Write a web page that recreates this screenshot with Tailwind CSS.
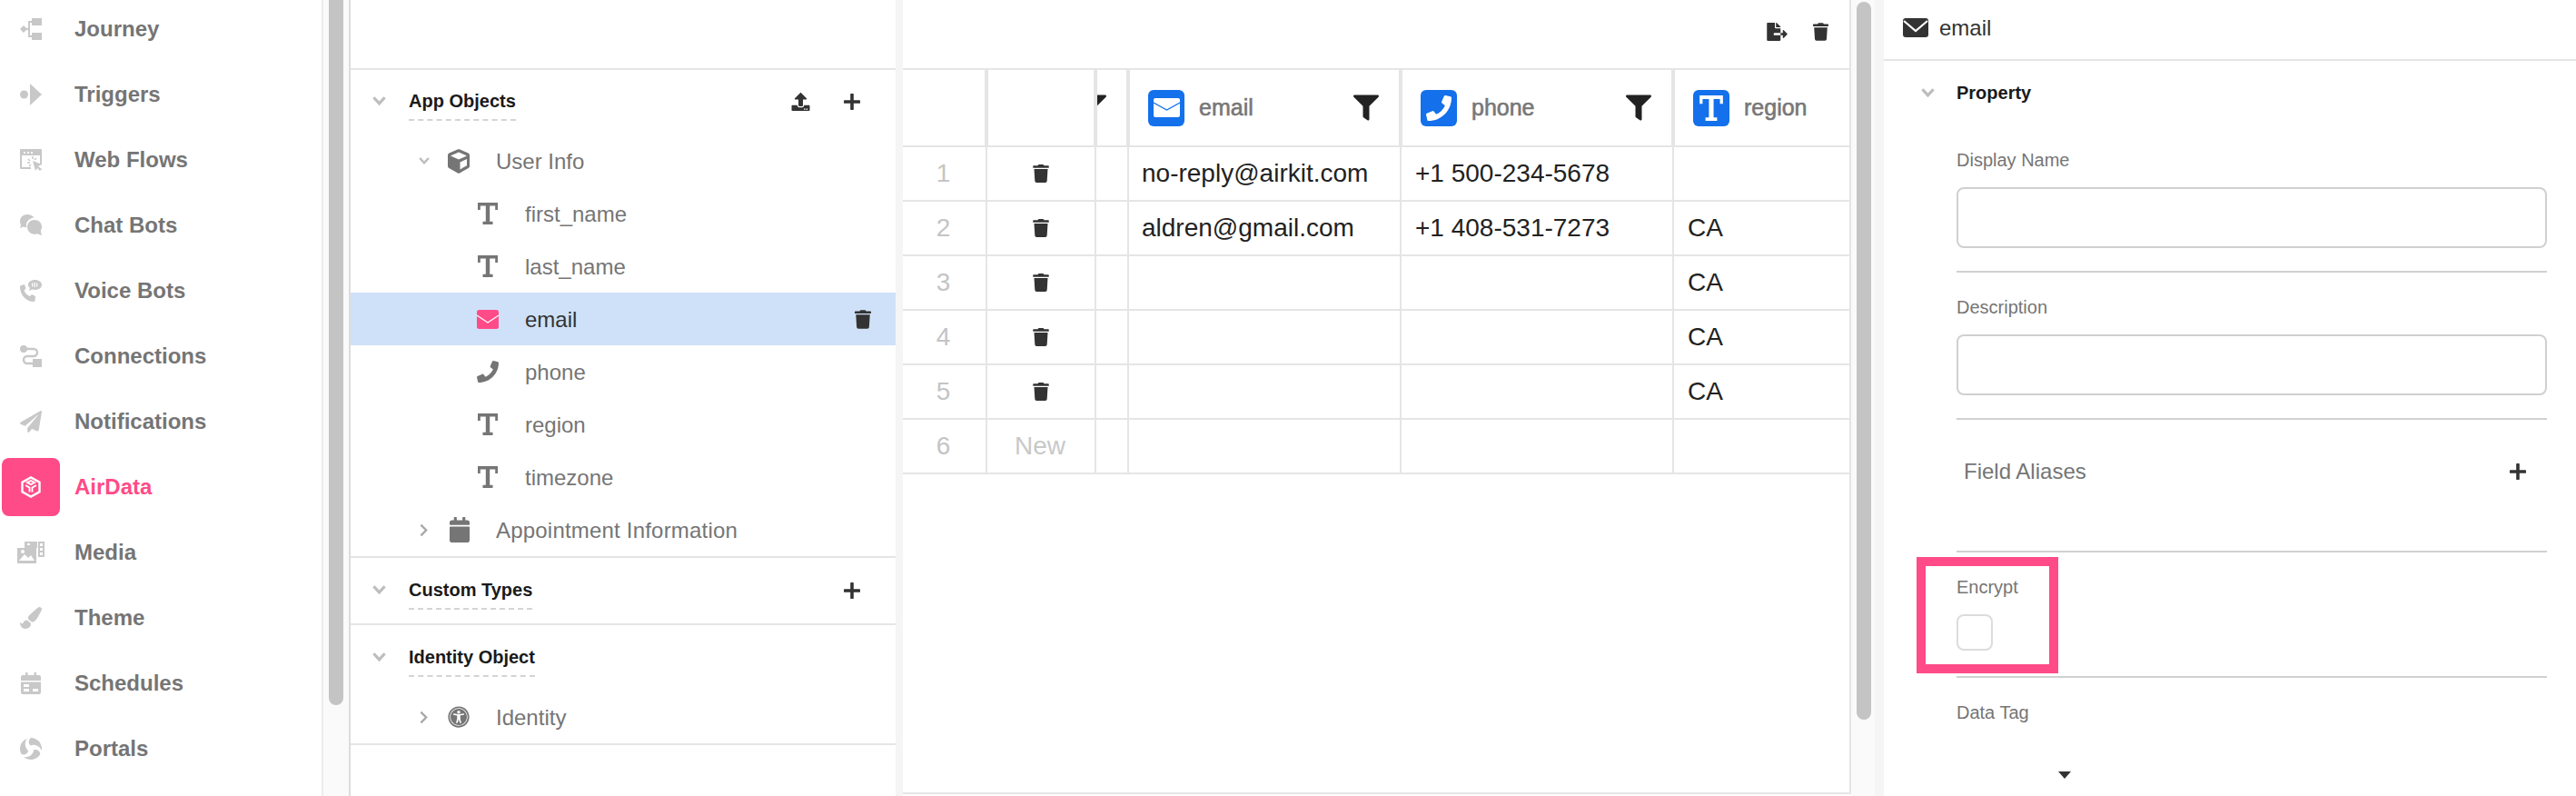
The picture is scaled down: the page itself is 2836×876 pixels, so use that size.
<!DOCTYPE html>
<html>
<head>
<meta charset="utf-8">
<script src="https://cdn.jsdelivr.net/npm/@tailwindcss/browser@4"></script>
</head>
<body class="w-[2836px] h-[876px] overflow-hidden flex bg-white text-[#222] font-['Liberation_Sans',Arial,sans-serif]">
<svg class="hidden">
  <symbol id="trash" viewBox="0 0 448 512"><path fill="currentColor" d="M432 32H312l-9.4-18.7A24 24 0 0 0 281.1 0H166.8a23.72 23.72 0 0 0-21.4 13.3L136 32H16A16 16 0 0 0 0 48v32a16 16 0 0 0 16 16h416a16 16 0 0 0 16-16V48a16 16 0 0 0-16-16zM53.2 467a48 48 0 0 0 47.9 45h245.8a48 48 0 0 0 47.9-45L416 128H32z"/></symbol>
  <symbol id="phone" viewBox="0 0 512 512"><path fill="currentColor" d="M493.4 24.6l-104-24c-11.3-2.6-22.9 3.3-27.5 13.9l-48 112c-4.2 9.8-1.4 21.3 6.9 28l60.6 49.6c-36 76.7-98.9 140.5-177.2 177.2l-49.6-60.6c-6.8-8.3-18.2-11.1-28-6.9l-112 48C3.9 366.5-2 378.1.6 389.4l24 104C27.1 504.2 36.7 512 48 512c256.1 0 464-207.5 464-464 0-11.2-7.7-20.9-18.6-23.4z"/></symbol>
  <symbol id="filter" viewBox="0 0 512 512"><path fill="currentColor" d="M487.976 0H24.028C2.71 0-8.047 25.866 7.058 40.971L192 225.941V432c0 7.831 3.821 15.17 10.237 19.662l80 55.98C298.02 518.69 320 507.493 320 487.98V225.941l184.947-184.97C520.021 25.896 509.338 0 487.976 0z"/></symbol>
  <symbol id="tee" viewBox="0 0 22 24"><path fill="currentColor" d="M0 0h22v8h-2.800V3.500H13.200v17.200H16.500V24h-11v-3.300h3.300V3.500H2.800V8H0z"/></symbol>
  <symbol id="plus" viewBox="0 0 18 18"><path fill="currentColor" d="M7.2 1.2a1.2 1.2 0 0 1 3.6 0v6h6a1.8 1.8 0 0 1 0 3.6h-6v6a1.8 1.8 0 0 1-3.6 0v-6h-6a1.8 1.8 0 0 1 0-3.6h6z"/></symbol>
  <symbol id="down" viewBox="0 0 16 12"><path fill="none" stroke="currentColor" stroke-width="3.4" d="M1.5 2l6.5 7 6.5-7"/></symbol>
  <symbol id="right" viewBox="0 0 10 16"><path fill="none" stroke="currentColor" stroke-width="2.6" d="M1.5 1.5L8 8l-6.5 6.5"/></symbol>
</svg>

<!-- Left navigation -->
<nav class="w-[354px] shrink-0 -mt-1 text-[24px] font-bold text-[#757575]">
  <div class="h-[72px] flex items-center pl-[2px]"><span class="w-[64px] h-[64px] flex items-center justify-center"><svg class="w-[24px] h-[24px] text-[#c8c8c8]" viewBox="0 0 24 24"><path fill="currentColor" d="M0 12l4-4 4 4-4 4zM13 0h11v8H13zM13 16h11v8H13z"/><path fill="none" stroke="currentColor" stroke-width="2" d="M13 4h-3v16h3M6 12h4"/></svg></span><span class="ml-[16px]">Journey</span></div>
  <div class="h-[72px] flex items-center pl-[2px]"><span class="w-[64px] h-[64px] flex items-center justify-center"><svg class="w-[24px] h-[24px] text-[#c8c8c8]" viewBox="0 0 24 24"><circle cx="4.500" cy="12" r="4.500" fill="currentColor"/><path fill="currentColor" d="M11 0l13 12-13 12z"/></svg></span><span class="ml-[16px]">Triggers</span></div>
  <div class="h-[72px] flex items-center pl-[2px]"><span class="w-[64px] h-[64px] flex items-center justify-center"><svg class="w-[24px] h-[24px] text-[#c8c8c8]" viewBox="0 0 24 24"><path fill="currentColor" d="M1 0h22a1 1 0 0 1 1 1v16h-2V7H2v13h10v2H1a1 1 0 0 1-1-1V1a1 1 0 0 1 1-1z"/><path fill="#fff" d="M4 3h2v2H4zM8 3h2v2H8zM12 3h2v2h-2z"/><path fill="currentColor" d="M14 13l10 4-4 2 4 3-2 2-3-3-2 3z"/><path fill="none" stroke="currentColor" stroke-width="1.500" d="M14 8v3M9 11l2 2M8 15h3M10 19l2-2M18 10l-2 2"/></svg></span><span class="ml-[16px]">Web Flows</span></div>
  <div class="h-[72px] flex items-center pl-[2px]"><span class="w-[64px] h-[64px] flex items-center justify-center"><svg class="w-[24px] h-[24px] text-[#c8c8c8]" viewBox="0 0 24 24"><path fill="currentColor" d="M8 0c3 0 6 1.500 7.500 3.500C10.500 4 7 7.500 7 12l.2 2c-1.200.2-2.500 0-3.700-.5L0 15l1-3.500C.3 10.300 0 9 0 7.500 0 3 3.500 0 8 0z"/><path fill="currentColor" d="M16 6c4.500 0 8 3 8 7.500 0 1.800-.5 3.300-1.300 4.500l1.300 5-5-1.800c-1 .4-2 .6-3 .6-4.500 0-8-3.500-8-8S11.500 6 16 6z"/></svg></span><span class="ml-[16px]">Chat Bots</span></div>
  <div class="h-[72px] flex items-center pl-[2px]"><span class="w-[64px] h-[64px] flex items-center justify-center"><svg class="w-[24px] h-[24px] text-[#c8c8c8]" viewBox="0 0 24 24"><path fill="currentColor" d="M5 5l1.500 4.500-2 2c1 3 3.500 5.500 6.500 6.500l2-2L17 18l-.5 5c-.1.6-.5 1-1.200 1C7 24 0 17 0 7.500c0-.7.400-1.200 1-1.300z"/><path fill="currentColor" d="M16.500 0C20.600 0 24 2.300 24 5.500S20.600 11 16.500 11c-1 0-2-.1-2.800-.4L10 12l1-3.200C9.700 7.800 9 6.700 9 5.500 9 2.300 12.400 0 16.500 0z"/><path fill="#fff" d="M13 3.500h1.200v4H13zM15.500 3h1.200v5h-1.200zM18 3.500h1.200v4H18z"/></svg></span><span class="ml-[16px]">Voice Bots</span></div>
  <div class="h-[72px] flex items-center pl-[2px]"><span class="w-[64px] h-[64px] flex items-center justify-center"><svg class="w-[24px] h-[24px] text-[#c8c8c8]" viewBox="0 0 24 24"><circle cx="4" cy="4" r="4" fill="currentColor"/><path fill="currentColor" d="M14 15h10v9H14z"/><path fill="none" stroke="currentColor" stroke-width="2.400" d="M6 4h9a4 4 0 0 1 0 8H8a4 4 0 0 0 0 8h7"/></svg></span><span class="ml-[16px]">Connections</span></div>
  <div class="h-[72px] flex items-center pl-[2px]"><span class="w-[64px] h-[64px] flex items-center justify-center"><svg class="w-[24px] h-[24px] text-[#c8c8c8]" viewBox="0 0 512 512"><path fill="currentColor" d="M476 3.2L12.5 270.6c-18.1 10.4-15.8 35.6 2.2 43.2L121 358.4l287.3-253.2c5.5-4.9 13.3 2.6 8.6 8.3L176 407v80.5c0 23.6 28.5 32.9 42.5 15.8L282 426l124.6 52.2c14.2 6 30.4-2.9 33-18.2l72-432C515 7.8 493.3-6.8 476 3.2z"/></svg></span><span class="ml-[16px]">Notifications</span></div>
  <div class="h-[72px] flex items-center pl-[2px] text-[#ff4b87]"><span class="w-[64px] h-[64px] flex items-center justify-center rounded-lg bg-[#ff4b87]"><svg class="w-[24px] h-[24px] text-white" viewBox="0 0 24 24" fill="none" stroke="currentColor" stroke-width="2.400"><path d="M12 1.400l9.500 5.300v10.600L12 22.600l-9.500-5.300V6.700z"/><path d="M8 7l4-2 4 2-4 2.200zM6 10l4.500 2.600v5M18 10l-4.500 2.600v5" stroke-width="1.900"/></svg></span><span class="ml-[16px]">AirData</span></div>
  <div class="h-[72px] flex items-center pl-[2px]"><span class="w-[64px] h-[64px] flex items-center justify-center"><svg class="w-[30px] h-[24px] text-[#c8c8c8]" viewBox="0 0 30 24"><path fill="currentColor" d="M8 0h14v7H8zM23 0h7v17h-7zM0 7h21v17H0z"/><path fill="#fff" d="M25 2h3v3h-3zM25 7h3v3h-3zM25 12h3v3h-3zM11 2h3v2h-3zM2 21l6-7 4 4 3-3 4 6z"/><circle cx="6" cy="11" r="2" fill="#fff"/></svg></span><span class="ml-[16px]">Media</span></div>
  <div class="h-[72px] flex items-center pl-[2px]"><span class="w-[64px] h-[64px] flex items-center justify-center"><svg class="w-[24px] h-[24px] text-[#c8c8c8]" viewBox="0 0 512 512"><path fill="currentColor" d="M167.02 309.34c-40.12 2.58-76.53 17.86-97.19 72.3-2.35 6.21-8 9.98-14.59 9.98-11.11 0-45.46-27.67-55.25-34.35C0 439.62 37.93 512 128 512c75.86 0 128-43.77 128-120.19 0-3.11-.65-6.08-.97-9.13l-88.01-73.34zM457.89 0c-15.16 0-29.37 6.71-40.21 16.45C213.27 199.05 192 203.34 192 257.09c0 13.7 3.25 26.76 8.73 38.7l63.82 53.18c7.21 1.8 14.64 3.03 22.39 3.03 62.11 0 98.11-45.47 211.16-256.46 7.38-14.35 13.9-29.85 13.9-45.99C512 20.64 486 0 457.89 0z"/></svg></span><span class="ml-[16px]">Theme</span></div>
  <div class="h-[72px] flex items-center pl-[2px]"><span class="w-[64px] h-[64px] flex items-center justify-center"><svg class="w-[22px] h-[24px] text-[#c8c8c8]" viewBox="0 0 22 24"><path fill="currentColor" d="M5 0h2.500v3h7V0H17v3h3a2 2 0 0 1 2 2v4H0V5a2 2 0 0 1 2-2h3zM0 10.500h22V22a2 2 0 0 1-2 2H2a2 2 0 0 1-2-2z"/><path fill="#fff" d="M3 13h6v3H3zM3 18h6v3H3zM13 18h6v3h-6z"/></svg></span><span class="ml-[16px]">Schedules</span></div>
  <div class="h-[72px] flex items-center pl-[2px]"><span class="w-[64px] h-[64px] flex items-center justify-center"><svg class="w-[24px] h-[24px] text-[#c8c8c8]" viewBox="0 0 24 24"><g fill="currentColor"><path d="M12 0A12 12 0 0 1 23.800 14.100C22 9 16 6.500 11.500 8.500 9 6 9 2.500 12 0z"/><path transform="rotate(120 12 12)" d="M12 0A12 12 0 0 1 23.800 14.100C22 9 16 6.500 11.500 8.500 9 6 9 2.500 12 0z"/><path transform="rotate(240 12 12)" d="M12 0A12 12 0 0 1 23.800 14.100C22 9 16 6.500 11.500 8.500 9 6 9 2.500 12 0z"/></g></svg></span><span class="ml-[16px]">Portals</span></div>
</nav>

<!-- Scrollbar of the navigation -->
<div class="w-[32px] shrink-0 h-full border-x-2 border-l-[#ececec] border-r-[#dcdcdc] bg-[#fafafa]">
  <div class="ml-[6px] w-[16px] h-[776px] bg-[#c4c4c4] rounded-b-lg"></div>
</div>

<!-- Tree -->
<section class="w-[600px] shrink-0 h-full text-[24px] text-[#757575]">
  <div class="h-[77px] border-b-2 border-[#e5e5e5]"></div>

  <div class="border-b-2 border-[#e5e5e5]">
    <div class="h-[71px] flex items-start pt-[22px] pl-[24px] pr-[39px] text-[20px] font-bold text-[#1a1a1a]">
      <svg class="w-[15px] h-[12px] mt-[6px] mr-[25px] text-[#bdbdbd]"><use href="#down"/></svg>
      <span class="leading-[24px] pb-[8px] border-b-2 border-dashed border-[#d4d4d4]">App Objects</span>
      <svg class="w-[21px] h-[20px] ml-auto mt-[3px] text-[#333]" viewBox="0 0 512 512"><path fill="currentColor" d="M296 384h-80c-13.300 0-24-10.700-24-24V192h-87.700c-17.800 0-26.700-21.500-14.100-34.100L242.300 5.700c7.500-7.500 19.800-7.500 27.300 0l152.200 152.200c12.600 12.600 3.700 34.100-14.100 34.100H320v168c0 13.300-10.700 24-24 24zm216-8v112c0 13.300-10.700 24-24 24H24c-13.300 0-24-10.700-24-24V376c0-13.300 10.700-24 24-24h136v8c0 30.900 25.100 56 56 56h80c30.900 0 56-25.100 56-56v-8h136c13.300 0 24 10.700 24 24zm-124 88c0-11-9-20-20-20s-20 9-20 20 9 20 20 20 20-9 20-20zm64 0c0-11-9-20-20-20s-20 9-20 20 9 20 20 20 20-9 20-20z"/></svg>
      <svg class="w-[18px] h-[18px] ml-[37px] mt-[4px] text-[#333]"><use href="#plus"/></svg>
    </div>
    <div class="h-[58px] flex items-center pl-[75px]">
      <svg class="w-[12px] h-[10px] mr-[20px] text-[#bdbdbd]" viewBox="0 0 16 12"><use href="#down"/></svg>
      <svg class="w-[24px] h-[27px] mr-[29px] text-[#757575]" viewBox="0 0 512 512" preserveAspectRatio="none"><path fill="currentColor" d="M239.100 6.300l-208 78c-18.700 7-31.100 25-31.100 45v225.100c0 18.200 10.300 34.800 26.500 42.900l208 104c13.500 6.800 29.400 6.800 42.900 0l208-104c16.300-8.100 26.500-24.800 26.500-42.900V129.300c0-20-12.400-37.900-31.100-44.900l-208-78C262 2.200 250 2.200 239.100 6.300zM256 68.400l192 72v1.100l-192 78-192-78v-1.100l192-72zm32 356V275.500l160-65v133.900l-160 80z"/></svg>
      <span class="pt-[2px]">User Info</span>
    </div>
    <div class="h-[58px] flex items-center pl-[140px]"><svg class="w-[22px] h-[24px] mr-[30px]"><use href="#tee"/></svg><span class="pt-[2px]">first_name</span></div>
    <div class="h-[58px] flex items-center pl-[140px]"><svg class="w-[22px] h-[24px] mr-[30px]"><use href="#tee"/></svg><span class="pt-[2px]">last_name</span></div>
    <div class="h-[58px] flex items-center pl-[139px] pr-[27px] bg-[#cfe1f9] text-[#333]">
      <svg class="w-[24px] h-[21px] mr-[29px] text-[#ff4b87]" viewBox="0 0 24 21"><rect width="24" height="21" rx="2.500" fill="currentColor"/><path d="M0 6l12 8 12-8" fill="none" stroke="#fff" stroke-width="1.200"/></svg>
      <span class="pt-[2px]">email</span>
      <svg class="w-[18px] h-[21px] ml-auto text-[#333]"><use href="#trash"/></svg>
    </div>
    <div class="h-[58px] flex items-center pl-[139px]"><svg class="w-[24px] h-[24px] mr-[29px]"><use href="#phone"/></svg><span class="pt-[2px]">phone</span></div>
    <div class="h-[58px] flex items-center pl-[140px]"><svg class="w-[22px] h-[24px] mr-[30px]"><use href="#tee"/></svg><span class="pt-[2px]">region</span></div>
    <div class="h-[58px] flex items-center pl-[140px]"><svg class="w-[22px] h-[24px] mr-[30px]"><use href="#tee"/></svg><span class="pt-[2px]">timezone</span></div>
    <div class="h-[58px] flex items-center pl-[76px]">
      <svg class="w-[9px] h-[15px] mr-[24px] text-[#a8a8a8]"><use href="#right"/></svg>
      <svg class="w-[22px] h-[28px] mr-[30px] text-[#757575]" viewBox="0 0 448 512" preserveAspectRatio="none"><path fill="currentColor" d="M12 192h424c6.600 0 12 5.400 12 12v260c0 26.500-21.500 48-48 48H48c-26.500 0-48-21.500-48-48V204c0-6.600 5.400-12 12-12zm436-44v-36c0-26.500-21.500-48-48-48h-48V12c0-6.600-5.400-12-12-12h-40c-6.600 0-12 5.400-12 12v52H160V12c0-6.600-5.400-12-12-12h-40c-6.600 0-12 5.400-12 12v52H48C21.500 64 0 85.500 0 112v36c0 6.600 5.400 12 12 12h424c6.600 0 12-5.400 12-12z"/></svg>
      <span class="pt-[2px] tracking-[0.2px] -ml-[1px]">Appointment Information</span>
    </div>
  </div>

  <div class="h-[74px] border-b-2 border-[#e5e5e5] flex items-start pt-[23px] pl-[24px] pr-[39px] text-[20px] font-bold text-[#1a1a1a]">
    <svg class="w-[15px] h-[12px] mt-[6px] mr-[25px] text-[#bdbdbd]"><use href="#down"/></svg>
    <span class="leading-[24px] pb-[8px] border-b-2 border-dashed border-[#d4d4d4]">Custom Types</span>
    <svg class="w-[18px] h-[18px] ml-auto mt-[4px] text-[#333]"><use href="#plus"/></svg>
  </div>

  <div class="border-b-2 border-[#e5e5e5]">
    <div class="h-[72px] flex items-start pt-[23px] pl-[24px] text-[20px] font-bold text-[#1a1a1a]">
      <svg class="w-[15px] h-[12px] mt-[6px] mr-[25px] text-[#bdbdbd]"><use href="#down"/></svg>
      <span class="leading-[24px] pb-[8px] border-b-2 border-dashed border-[#d4d4d4]">Identity Object</span>
    </div>
    <div class="h-[58px] flex items-center pl-[76px]">
      <svg class="w-[9px] h-[15px] mr-[22px] text-[#a8a8a8]"><use href="#right"/></svg>
      <svg class="w-[24px] h-[24px] mr-[29px] text-[#757575]" viewBox="0 0 512 512"><path fill="currentColor" d="M256 48c114.953 0 208 93.029 208 208 0 114.953-93.029 208-208 208-114.953 0-208-93.029-208-208 0-114.953 93.029-208 208-208m0-40C119.033 8 8 119.033 8 256s111.033 248 248 248 248-111.033 248-248S392.967 8 256 8zm0 56C149.961 64 64 149.961 64 256s85.961 192 192 192 192-85.961 192-192S362.039 64 256 64zm0 44c19.882 0 36 16.118 36 36s-16.118 36-36 36-36-16.118-36-36 16.118-36 36-36zm117.741 98.023c-28.712 6.779-55.511 12.748-82.14 15.807.851 101.023 12.306 123.052 25.037 155.621 3.617 9.26-.957 19.698-10.217 23.315-9.261 3.617-19.699-.957-23.316-10.217-8.705-22.308-17.086-40.636-22.261-78.549h-9.686c-5.167 37.851-13.534 56.208-22.262 78.549-3.615 9.255-14.05 13.836-23.315 10.217-9.26-3.617-13.834-14.056-10.217-23.315 12.713-32.541 24.185-54.541 25.037-155.621-26.629-3.058-53.428-9.027-82.141-15.807-8.6-2.031-13.926-10.648-11.895-19.249s10.647-13.926 19.249-11.895c96.686 22.829 124.283 22.783 220.775 0 8.599-2.03 17.218 3.294 19.249 11.895 2.029 8.601-3.297 17.219-11.897 19.249z"/></svg>
      <span class="pt-[2px]">Identity</span>
    </div>
  </div>
</section>

<div class="w-[8px] shrink-0 h-full bg-[#f5f5f5]"></div>

<!-- Table -->
<section class="w-[1044px] shrink-0 h-[874px] border-b-2 border-r-2 border-[#e5e5e5] text-[28px]">
  <div class="h-[75px] flex items-center justify-end pb-[6px] pr-[23px] text-[#333]">
    <svg class="w-[23px] h-[20px]" viewBox="0 0 576 512"><path fill="currentColor" d="M384 121.900c0-6.300-2.500-12.400-7-16.900L279.100 7c-4.500-4.500-10.600-7-17-7H256v128h128zM571 308l-95.700-96.400c-10.100-10.100-27.400-3-27.400 11.300V288h-64v64h64v65.200c0 14.300 17.300 21.400 27.400 11.300L571 332c6.600-6.700 6.600-17.400 0-24zm-379 28v-32c0-8.800 7.200-16 16-16h176V160H248c-13.200 0-24-10.800-24-24V0H24C10.700 0 0 10.700 0 24v464c0 13.300 10.700 24 24 24h336c13.300 0 24-10.700 24-24V352H208c-8.800 0-16-7.200-16-16z"/></svg>
    <svg class="w-[17px] h-[20px] ml-[28px]"><use href="#trash"/></svg>
  </div>

  <div class="grid grid-cols-[94px_120px_36px_300px_300px_1fr] h-[87px] border-y-2 border-[#e5e5e5] text-[25px] text-[#777] [-webkit-text-stroke:0.6px_#777]">
    <div class="border-r-4 border-[#e5e5e5]"></div>
    <div class="border-r-4 border-[#e5e5e5]"></div>
    <div class="border-r-4 border-[#e5e5e5] flex items-center overflow-hidden"><svg class="w-[28px] h-[29px] ml-[-18px] shrink-0 text-[#222]"><use href="#filter"/></svg></div>
    <div class="border-r-4 border-[#e5e5e5] flex items-center pl-[20px] pr-[22px]">
      <span class="w-[40px] h-[40px] rounded-md bg-[#1470eb] flex items-center justify-center mr-[16px]"><svg class="w-[29px] h-[21px]" viewBox="0 0 29 21"><rect width="29" height="21" rx="2" fill="#fff"/><path d="M0 5l14.500 8L29 5" fill="none" stroke="#1470eb" stroke-width="1.300"/></svg></span>
      <span>email</span>
      <svg class="w-[28px] h-[29px] ml-auto text-[#222]"><use href="#filter"/></svg>
    </div>
    <div class="border-r-4 border-[#e5e5e5] flex items-center pl-[20px] pr-[22px]">
      <span class="w-[40px] h-[40px] rounded-md bg-[#1470eb] flex items-center justify-center mr-[16px] text-white"><svg class="w-[28px] h-[28px]"><use href="#phone"/></svg></span>
      <span>phone</span>
      <svg class="w-[28px] h-[29px] ml-auto text-[#222]"><use href="#filter"/></svg>
    </div>
    <div class="flex items-center pl-[20px]">
      <span class="w-[40px] h-[40px] rounded-md bg-[#1470eb] flex items-center justify-center mr-[16px] text-white"><svg class="w-[26px] h-[28px]"><use href="#tee"/></svg></span>
      <span>region</span>
    </div>
  </div>

  <div class="grid grid-cols-[93px_120px_36px_300px_300px_1fr] h-[60px] border-b-2 border-[#e5e5e5]">
    <div class="border-r-2 border-[#e5e5e5] flex items-center justify-center text-[#c4c4c4] pr-[2px]">1</div>
    <div class="border-r-2 border-[#e5e5e5] flex items-center justify-center text-[#333]"><svg class="w-[18px] h-[20px]"><use href="#trash"/></svg></div>
    <div class="border-r-2 border-[#e5e5e5]"></div>
    <div class="border-r-2 border-[#e5e5e5] flex items-center pl-[14px]">no-reply@airkit.com</div>
    <div class="border-r-2 border-[#e5e5e5] flex items-center pl-[15px]">+1 500-234-5678</div>
    <div class="flex items-center pl-[15px]"></div>
  </div>
  <div class="grid grid-cols-[93px_120px_36px_300px_300px_1fr] h-[60px] border-b-2 border-[#e5e5e5]">
    <div class="border-r-2 border-[#e5e5e5] flex items-center justify-center text-[#c4c4c4] pr-[2px]">2</div>
    <div class="border-r-2 border-[#e5e5e5] flex items-center justify-center text-[#333]"><svg class="w-[18px] h-[20px]"><use href="#trash"/></svg></div>
    <div class="border-r-2 border-[#e5e5e5]"></div>
    <div class="border-r-2 border-[#e5e5e5] flex items-center pl-[14px]">aldren@gmail.com</div>
    <div class="border-r-2 border-[#e5e5e5] flex items-center pl-[15px]">+1 408-531-7273</div>
    <div class="flex items-center pl-[15px]">CA</div>
  </div>
  <div class="grid grid-cols-[93px_120px_36px_300px_300px_1fr] h-[60px] border-b-2 border-[#e5e5e5]">
    <div class="border-r-2 border-[#e5e5e5] flex items-center justify-center text-[#c4c4c4] pr-[2px]">3</div>
    <div class="border-r-2 border-[#e5e5e5] flex items-center justify-center text-[#333]"><svg class="w-[18px] h-[20px]"><use href="#trash"/></svg></div>
    <div class="border-r-2 border-[#e5e5e5]"></div>
    <div class="border-r-2 border-[#e5e5e5]"></div>
    <div class="border-r-2 border-[#e5e5e5]"></div>
    <div class="flex items-center pl-[15px]">CA</div>
  </div>
  <div class="grid grid-cols-[93px_120px_36px_300px_300px_1fr] h-[60px] border-b-2 border-[#e5e5e5]">
    <div class="border-r-2 border-[#e5e5e5] flex items-center justify-center text-[#c4c4c4] pr-[2px]">4</div>
    <div class="border-r-2 border-[#e5e5e5] flex items-center justify-center text-[#333]"><svg class="w-[18px] h-[20px]"><use href="#trash"/></svg></div>
    <div class="border-r-2 border-[#e5e5e5]"></div>
    <div class="border-r-2 border-[#e5e5e5]"></div>
    <div class="border-r-2 border-[#e5e5e5]"></div>
    <div class="flex items-center pl-[15px]">CA</div>
  </div>
  <div class="grid grid-cols-[93px_120px_36px_300px_300px_1fr] h-[60px] border-b-2 border-[#e5e5e5]">
    <div class="border-r-2 border-[#e5e5e5] flex items-center justify-center text-[#c4c4c4] pr-[2px]">5</div>
    <div class="border-r-2 border-[#e5e5e5] flex items-center justify-center text-[#333]"><svg class="w-[18px] h-[20px]"><use href="#trash"/></svg></div>
    <div class="border-r-2 border-[#e5e5e5]"></div>
    <div class="border-r-2 border-[#e5e5e5]"></div>
    <div class="border-r-2 border-[#e5e5e5]"></div>
    <div class="flex items-center pl-[15px]">CA</div>
  </div>
  <div class="grid grid-cols-[93px_120px_36px_300px_300px_1fr] h-[60px] border-b-2 border-[#e5e5e5]">
    <div class="border-r-2 border-[#e5e5e5] flex items-center justify-center text-[#c4c4c4] pr-[2px]">6</div>
    <div class="border-r-2 border-[#e5e5e5] flex items-center justify-center text-[#c8c8c8] pr-[2px]">New</div>
    <div class="border-r-2 border-[#e5e5e5]"></div>
    <div class="border-r-2 border-[#e5e5e5]"></div>
    <div class="border-r-2 border-[#e5e5e5]"></div>
    <div></div>
  </div>
</section>

<!-- Table scrollbar -->
<div class="w-[26px] shrink-0 h-full bg-[#fafafa] pl-[6px] pt-[2px]">
  <div class="w-[16px] h-[790px] bg-[#c4c4c4] rounded-lg"></div>
</div>
<div class="w-[10px] shrink-0 h-full bg-[#f5f5f5]"></div>

<!-- Properties -->
<aside class="relative flex-1 h-full text-[20px] text-[#757575]">
  <div class="h-[67px] border-b-2 border-[#e5e5e5] flex items-center pl-[21px] pb-[4px] text-[24px] text-[#333]">
    <svg class="w-[28px] h-[21px] mr-[12px]" viewBox="0 0 28 21"><rect width="28" height="21" rx="3" fill="#333"/><path d="M1 3l13 11L27 3" fill="none" stroke="#fff" stroke-width="2.200"/></svg>
    <span>email</span>
  </div>
  <div class="h-[70px] flex items-center pl-[41px] font-bold text-[#1a1a1a]">
    <svg class="w-[15px] h-[12px] mr-[24px] text-[#bdbdbd]"><use href="#down"/></svg>
    <span>Property</span>
  </div>
  <div class="ml-[80px] mr-[32px]">
    <div class="h-[30px] leading-[30px] mt-[24px]">Display Name</div>
    <div class="h-[67px] mt-[15px] border-2 border-[#d0d0d0] rounded-lg"></div>
    <div class="h-[2px] mt-[25px] bg-[#d0d0d0]"></div>
    <div class="h-[30px] leading-[30px] mt-[23px]">Description</div>
    <div class="h-[67px] mt-[15px] border-2 border-[#d0d0d0] rounded-lg"></div>
    <div class="h-[2px] mt-[25px] bg-[#d0d0d0]"></div>
    <div class="h-[40px] mt-[37px] flex items-center pl-[8px] pr-[23px] text-[24px]">
      <span>Field Aliases</span>
      <svg class="w-[18px] h-[18px] ml-auto text-[#333]"><use href="#plus"/></svg>
    </div>
    <div class="h-[2px] mt-[67px] bg-[#d0d0d0]"></div>
    <div class="h-[30px] leading-[30px] mt-[23px]">Encrypt</div>
    <div class="w-[40px] h-[40px] mt-[15px] border-2 border-[#dcdcdc] rounded-lg"></div>
    <div class="h-[2px] mt-[28px] bg-[#d0d0d0]"></div>
    <div class="h-[30px] leading-[30px] mt-[23px]">Data Tag</div>
    <svg class="w-[14px] h-[8px] mt-[50px] ml-[112px] text-[#333]" viewBox="0 0 14 8"><path fill="currentColor" d="M0 0h14L7 8z"/></svg>
  </div>
  <div class="absolute left-[36px] top-[613px] w-[156px] h-[128px] border-[10px] border-[#ff4b87]"></div>
</aside>
</body>
</html>
